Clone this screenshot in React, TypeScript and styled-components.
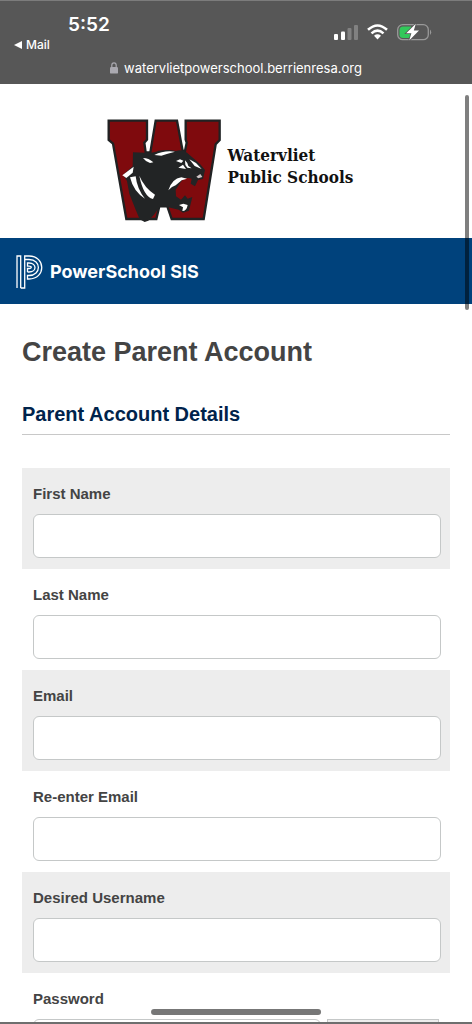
import React from "react";
import styled, { createGlobalStyle } from "styled-components";

const GlobalStyle = createGlobalStyle`
  *, *::before, *::after { box-sizing: border-box; }
  body { margin: 0; background: #fff; }
`;

const sans = `"Liberation Sans", Arial, Helvetica, sans-serif`;
const system = `Inter, "Liberation Sans", sans-serif`;

const Screen = styled.div`
  position: relative;
  display: flex;
  flex-direction: column;
  height: 100vh;
  overflow: hidden;
  background: #fff;
  border-bottom: 2px solid #6e6e6e;
  font-family: ${sans};
  color: #444;
`;

const BrowserBar = styled.header`
  flex: none;
  background: #575757;
  border-top: 1px solid #7c7c7c;
  color: #fff;
  font-family: ${system};
  padding: 13px 40px 7px 14px;
`;

const StatusRow = styled.div`
  display: flex;
  justify-content: space-between;
  align-items: flex-start;
  height: 22px;
`;

const Clock = styled.div`
  padding-left: 54px;
  font-size: 19px;
  line-height: 22px;
  font-weight: 600;
`;

const StatusIcons = styled.div`
  display: flex;
  align-items: center;
  gap: 9px;
  padding-top: 9px;
`;

const BackLink = styled.a`
  display: flex;
  align-items: center;
  gap: 4px;
  width: max-content;
  font-size: 12px;
  line-height: 18px;
  font-weight: 500;
  color: #fff;
  text-decoration: none;
`;

const Address = styled.div`
  display: flex;
  justify-content: center;
  align-items: center;
  gap: 6px;
  margin: 5px 0 0 26px;
  font-size: 13px;
  line-height: 18px;
`;

const Page = styled.main`
  flex: 1;
  min-height: 0;
  overflow: hidden;
`;

const SchoolBanner = styled.div`
  display: flex;
  justify-content: center;
  align-items: flex-start;
  gap: 7px;
  height: 154px;
  padding: 35px 12px 0 0;
`;

const SchoolName = styled.div`
  padding-top: 25px;
  font-family: "DejaVu Serif Condensed", "DejaVu Serif", serif;
  font-size: 17px;
  line-height: 22px;
  font-weight: 700;
  color: #111;
`;

const ProductBar = styled.div`
  display: flex;
  align-items: center;
  gap: 7px;
  height: 66px;
  padding: 2px 0 0 16px;
  background: #00427c;
  color: #fff;
  font-family: ${system};
  font-size: 18px;
  line-height: 24px;
  font-weight: 700;
`;

const Content = styled.form`
  padding: 0 22px;
`;

const Title = styled.h1`
  margin: 32px 0 0;
  font-size: 27px;
  line-height: 32px;
  color: #444;
`;

const SectionTitle = styled.h2`
  margin: 34px 0 33px;
  padding-bottom: 8px;
  border-bottom: 1px solid #c8c8c8;
  font-size: 20px;
  line-height: 24px;
  color: #00234b;
`;

const FieldRow = styled.div`
  height: 101px;
  padding: 16px 9px 0 11px;
  background: #fff;
  &:nth-of-type(odd) { background: #ededed; }
`;

const Label = styled.label`
  display: block;
  margin-bottom: 10px;
  font-size: 15px;
  line-height: 20px;
  font-weight: 700;
  color: #444;
`;

const Input = styled.input`
  display: block;
  width: 100%;
  min-width: 0;
  height: 44px;
  padding: 0 10px;
  border: 1px solid #c5c8c8;
  border-radius: 6px;
  background: #fff;
  font: 16px ${sans};
  color: #444;
`;

const PasswordLine = styled.div`
  display: grid;
  grid-template-columns: 72fr 28fr;
  gap: 6px;
  padding-right: 2px;
`;

const Strength = styled.div`
  height: 44px;
  border: 1px solid #c5c8c8;
  background: #ededed;
`;

const ScrollThumb = styled.div`
  position: absolute;
  top: 95px;
  right: 3px;
  width: 4px;
  height: 215px;
  border-radius: 2px;
  background: rgba(0, 0, 0, 0.5);
`;

const HomeIndicator = styled.div`
  position: absolute;
  bottom: 7px;
  left: 50%;
  width: 36%;
  height: 6px;
  border-radius: 3px;
  background: #777;
  transform: translateX(-50%);
`;

const Signal = () => (
  <svg width="24" height="16" viewBox="0 0 24 16" fill="#fff" aria-hidden="true">
    <rect x="0" y="10" width="4" height="6" rx="1" />
    <rect x="7" y="7.500" width="4" height="8.500" rx="1" />
    <rect x="13.500" y="4" width="4" height="12" rx="1" opacity=".25" />
    <rect x="20" y="1" width="4" height="15" rx="1" opacity=".25" />
  </svg>
);

const Wifi = () => (
  <svg width="21" height="16" viewBox="0 0 21 16" aria-hidden="true">
    <g fill="none" stroke="#fff" strokeWidth="2.600">
      <path d="M1 5.800Q10.500 -2.800 20 5.800" />
      <path d="M4.500 9.400Q10.500 4 16.500 9.400" />
    </g>
    <path d="M7 11.700Q10.500 8.800 14 11.700L10.500 15.500Z" fill="#fff" />
  </svg>
);

const Battery = () => (
  <svg width="35" height="18" viewBox="0 0 35 18" aria-hidden="true">
    <rect x=".7" y="1.700" width="30.600" height="15" rx="5" fill="none" stroke="#999" strokeWidth="1.300" />
    <path d="M33 6.500Q35.400 9.200 33 12Z" fill="#999" />
    <path d="M6 3.500H14V15H6Q2.500 15 2.500 11.500V7Q2.500 3.500 6 3.500Z" fill="#32c85a" />
    <path d="M18.800 .8L9.200 10.300H14.400L12.200 17.600L22 7.600H16.800Z" fill="#fff" stroke="#575757" strokeWidth="1.600" paintOrder="stroke" />
  </svg>
);

const Lock = () => (
  <svg width="8" height="12" viewBox="0 0 8 12" aria-hidden="true">
    <path d="M1.800 6V3.300C1.800 .1 6.200 .1 6.200 3.300V6" fill="none" stroke="#aaa9b0" strokeWidth="1.200" />
    <rect y="5" width="8" height="6.600" rx="1.200" fill="#aaa9b0" />
  </svg>
);

const PantherLogo = () => (
  <svg width="114" height="104" viewBox="36 28 342 312" role="img" aria-label="Watervliet Panthers">
    <path
      d="M41 33H156V90L148 99L152 128H166L182 33H246L263 124H270L275 99L272 90V33H374V91L362 104L326 328H230L217 290H193L184 328H94L54 102L41 91Z"
      fill="#7f0a0d" stroke="#202223" strokeWidth="7"
    />
    <path
      d="M114 128L150 129Q178 130 190 123Q222 119 243 124Q260 118 276 129L315 163L330 181L324 208L309 211L300 230L287 222L290 207Q270 200 258 216L242 240L243 260L258 270L270 257L278 267L292 262L282 303L264 309L251 300L226 294Q205 288 193 293L177 315L160 333L149 337L134 329L122 300L103 252L96 214L84 196L113 170Z"
      fill="#222425"
    />
    <path d="M82 197L116 171L113 189L94 205Z" fill="#fff" />
    <path d="M105 203L122 200Q126 238 150 267Q116 247 105 203Z" fill="#fff" />
    <path d="M133 198Q148 234 180 255L174 268Q145 260 133 198Z" fill="#fff" />
    <path d="M144 145Q161 145 175 158L165 160Q151 155 144 145Z" fill="#fff" />
    <path d="M178 136Q207 121 240 126Q217 132 199 138Z" fill="#fff" />
    <path d="M243 154L255 149L265 153L259 160ZM250 174L264 165L273 178ZM270 152Q277 158 280 169L290 176L277 174L271 166ZM283 149L303 160L320 178L299 169Z" fill="#fff" />
    <path d="M220 242Q231 207 259 203L276 207L260 212L242 227Q231 230 220 242Z" fill="#fff" />
    <path d="M304 201L316 193L322 202L310 206Z" fill="#cfc6c7" />
    <path d="M252 286L265 282L278 286Q275 304 262 304L264 293Z" fill="#fff" />
  </svg>
);

const PowerSchoolMark = () => (
  <svg width="27" height="34" viewBox="0 0 27 34" fill="none" stroke="#fff" strokeWidth="1.300" aria-hidden="true">
    <path d="M1 33V1H4.700V33M4.700 33H8.700V1H13C30 1 30 24 13 24H11.500V20.500H13C25.500 20.500 25.500 4.500 13 4.500H8.700" />
    <path d="M11.500 17V13.500H13C16 13.500 16 11.200 13 11.200H11.500V8H13C21 8 21 17 13 17H11.500" />
  </svg>
);

const fields = [
  { id: "first-name", label: "First Name", type: "text" },
  { id: "last-name", label: "Last Name", type: "text" },
  { id: "email", label: "Email", type: "email" },
  { id: "email-confirm", label: "Re-enter Email", type: "email" },
  { id: "username", label: "Desired Username", type: "text" },
];

export default function App() {
  return (
    <Screen>
      <GlobalStyle />
      <BrowserBar>
        <StatusRow>
          <Clock>5:52</Clock>
          <StatusIcons>
            <Signal />
            <Wifi />
            <Battery />
          </StatusIcons>
        </StatusRow>
        <BackLink href="#mail">
          <svg width="8" height="8" viewBox="0 0 8 8" aria-hidden="true">
            <path d="M0 4L8 0V8Z" fill="#fff" />
          </svg>
          Mail
        </BackLink>
        <Address>
          <Lock />
          watervlietpowerschool.berrienresa.org
        </Address>
      </BrowserBar>
      <Page>
        <SchoolBanner>
          <PantherLogo />
          <SchoolName>
            Watervliet
            <br />
            Public Schools
          </SchoolName>
        </SchoolBanner>
        <ProductBar>
          <PowerSchoolMark />
          PowerSchool SIS
        </ProductBar>
        <Content>
          <Title>Create Parent Account</Title>
          <SectionTitle>Parent Account Details</SectionTitle>
          {fields.map((field) => (
            <FieldRow key={field.id}>
              <Label htmlFor={field.id}>{field.label}</Label>
              <Input id={field.id} type={field.type} />
            </FieldRow>
          ))}
          <FieldRow>
            <Label htmlFor="password">Password</Label>
            <PasswordLine>
              <Input id="password" type="password" />
              <Strength />
            </PasswordLine>
          </FieldRow>
        </Content>
      </Page>
      <ScrollThumb />
      <HomeIndicator />
    </Screen>
  );
}
